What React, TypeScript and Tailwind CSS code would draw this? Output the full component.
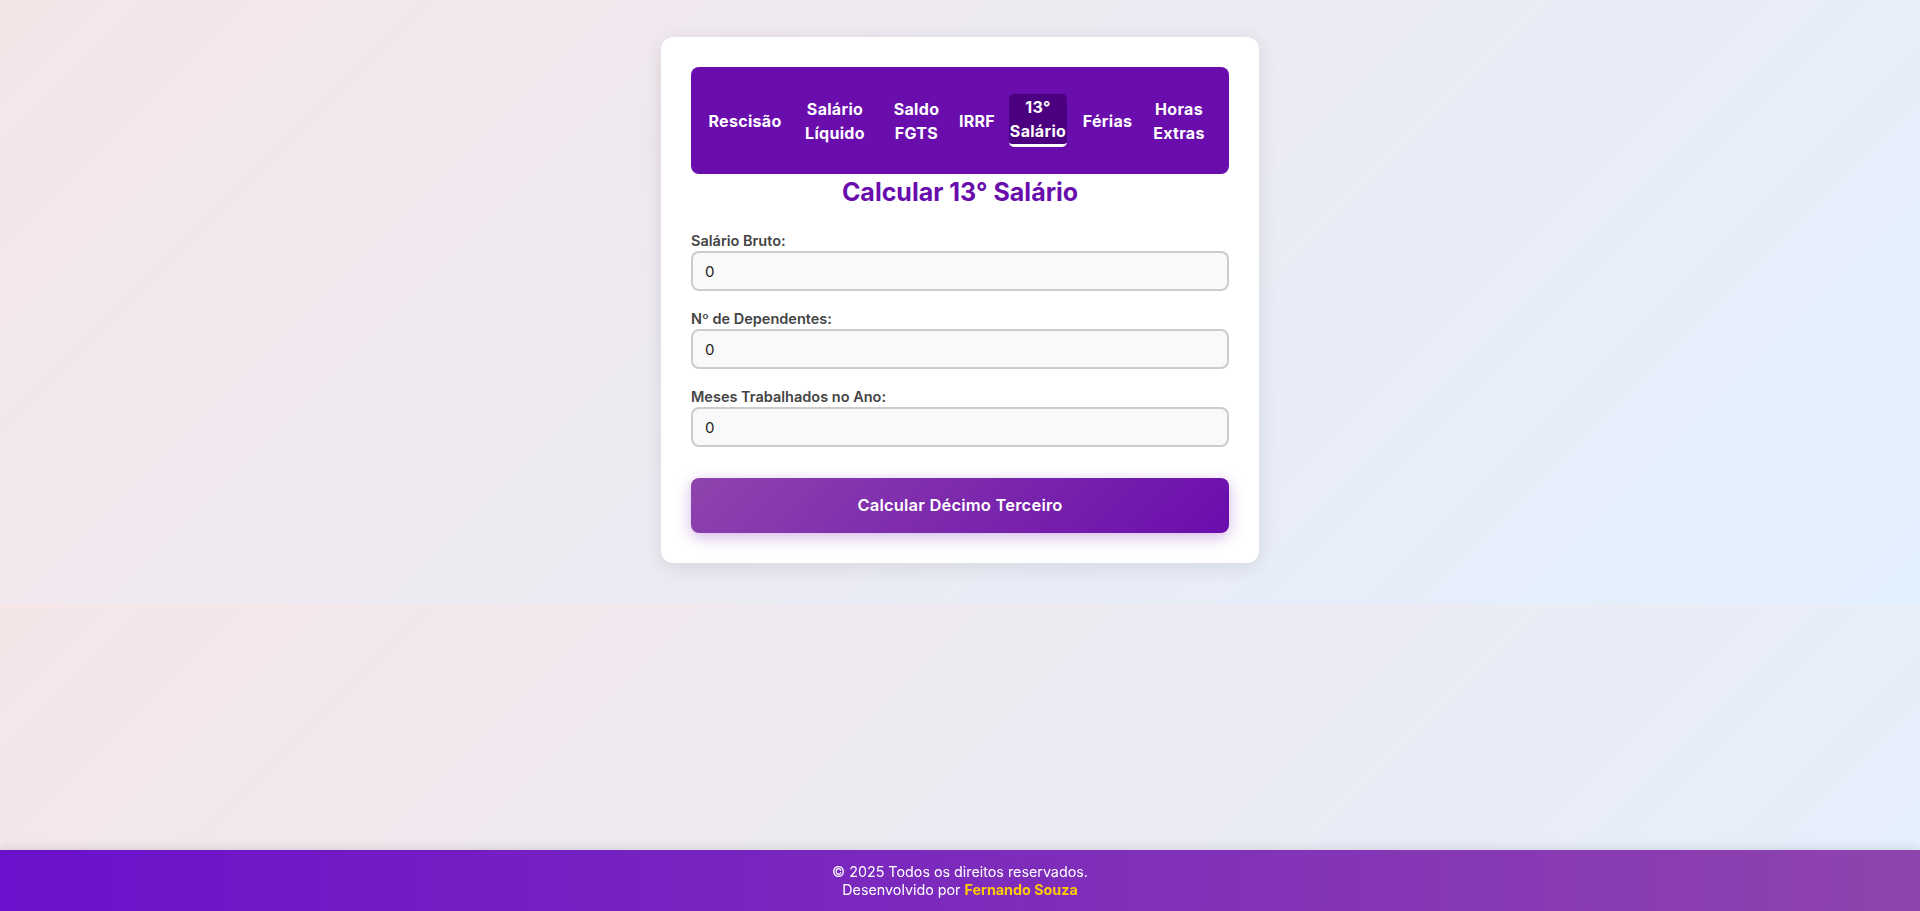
import { useState } from 'react';

const tabs = [
  { id: 'rescisao', lines: ['Rescisão'], cls: 'ml-[17px] w-[74px]' },
  { id: 'liquido', lines: ['Salário', 'Líquido'], cls: 'ml-[23px] w-[60px]' },
  { id: 'fgts', lines: ['Saldo', 'FGTS'], cls: 'ml-[28px] w-[47px]' },
  { id: 'irrf', lines: ['IRRF'], cls: 'ml-[20px] w-[34px]' },
  { id: 'decimo', lines: ['13°', 'Salário'], cls: 'ml-[15px] w-[58px]' },
  { id: 'ferias', lines: ['Férias'], cls: 'ml-[16px] w-[49px]' },
  { id: 'extras', lines: ['Horas', 'Extras'], cls: 'ml-[22px] w-[50px]' },
];

const fields = ['Salário Bruto:', 'Nº de Dependentes:', 'Meses Trabalhados no Ano:'];

const App = () => {
  const [active, setActive] = useState('decimo');

  return (
    <div className="min-h-screen bg-[linear-gradient(135deg,#f5e6e8,#e3f0ff)] bg-[length:100%_604px] bg-repeat font-['Inter','Noto_Sans',sans-serif]">
      <div className="pt-[37px] pb-[41px]">
        <div className="mx-auto w-[598px] rounded-xl bg-white p-[30px] shadow-[0_4px_20px_rgba(0,0,0,0.1)]">
          {/* Tabs */}
          <nav className="flex h-[107px] items-center rounded-lg bg-[#6a0dad]">
            {tabs.map((t) => {
              const isActive = t.id === active;
              return (
                <button
                  key={t.id}
                  onClick={() => setActive(t.id)}
                  className={`${t.cls} flex shrink-0 flex-col items-center justify-center text-base font-bold leading-6 tracking-[0.3px] text-white ${
                    isActive ? 'h-[53px] rounded-[5px] border-b-[3px] border-white bg-[#4b0082]' : ''
                  }`}
                >
                  {t.lines.map((l) => (
                    <span key={l} className="whitespace-nowrap">
                      {l}
                    </span>
                  ))}
                </button>
              );
            })}
          </nav>

          <h2 className="mt-[2px] text-center text-[25px] font-bold leading-8 text-[#6a0dad]">
            Calcular 13° Salário
          </h2>

          <form className="mt-[22px] flex flex-col gap-[17px]" onSubmit={(e) => e.preventDefault()}>
            {fields.map((f) => (
              <div key={f} className="flex flex-col">
                <label className="text-[14.5px] font-semibold leading-[21px] text-[#444]">{f}</label>
                <input
                  type="text"
                  defaultValue="0"
                  className="h-10 w-full rounded-lg border-2 border-[#ccc] bg-[#f9f9f9] px-3 text-[15px] text-[#222] outline-none"
                />
              </div>
            ))}

            <button
              type="submit"
              className="mt-[14px] h-[55px] w-full rounded-lg bg-[linear-gradient(135deg,#8e44ad,#6a0dad)] text-[16.5px] font-semibold tracking-[0.2px] text-white shadow-[0_4px_15px_rgba(106,13,173,0.3)]"
            >
              Calcular Décimo Terceiro
            </button>
          </form>
        </div>
      </div>

      <footer className="fixed bottom-0 left-0 flex h-[61px] w-full flex-col items-center justify-center bg-[linear-gradient(to_right,#6a11cb,#8e44ad)] text-[14.3px] leading-[18px] text-white shadow-[0_-2px_10px_rgba(0,0,0,0.1)]">
        <p>© 2025 Todos os direitos reservados.</p>
        <p>
          Desenvolvido por <span className="font-bold text-[#ffcc00]">Fernando Souza</span>
        </p>
      </footer>
    </div>
  );
};

export default App;
